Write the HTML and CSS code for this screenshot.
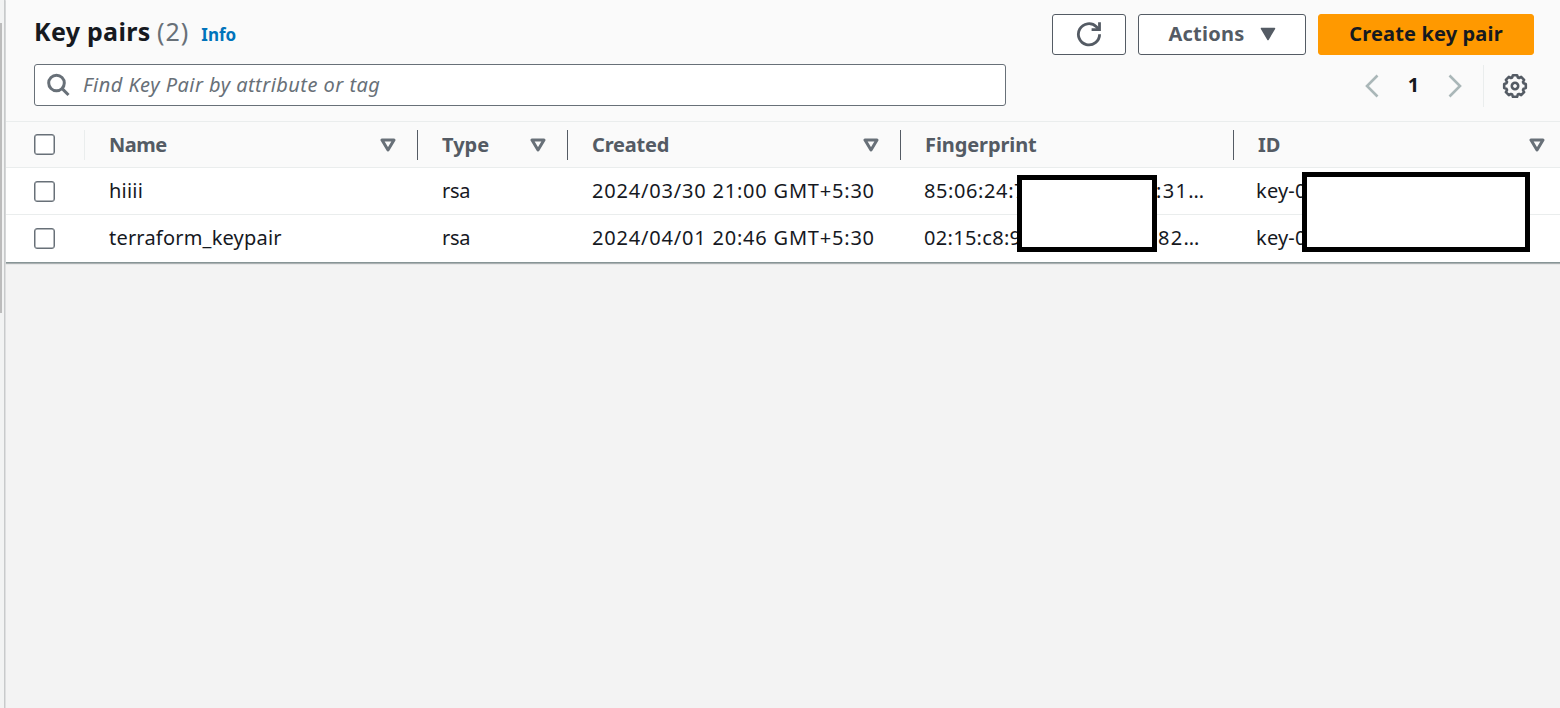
FILE: index.html
```html
<!DOCTYPE html>
<html lang="en">
<head>
<meta charset="utf-8">
<title>Key pairs</title>
<link rel="stylesheet" href="styles.css">
</head>
<body>
<div class="page">
  <aside class="rail"><div class="rail-thumb"></div></aside>
  <main class="content">
    <section class="panel">
      <header class="panel-header">
        <div class="title-row">
          <h1 class="title"><span class="title-name">Key pairs</span><span class="count">(2)</span></h1>
          <a class="info">Info</a>
          <div class="actions">
            <button class="btn btn-refresh" aria-label="Refresh">
              <svg width="26" height="26" viewBox="0 0 26 26" fill="none" stroke="#545b64" stroke-width="2.800"><path d="M23.600 13.300A10.600 10.600 0 1 1 20.400 5.700L22.500 8"/><path d="M23.500 1.200V8.700H15.600"/></svg>
            </button>
            <button class="btn btn-actions"><span class="label-actions">Actions</span>
              <svg width="16" height="14" viewBox="0 0 16 14"><path d="M1.500 1.500h13L8 12.500z" fill="#545b64" stroke="#545b64" stroke-width="1.500" stroke-linejoin="round"/></svg>
            </button>
            <button class="btn btn-primary"><span class="label-create">Create key pair</span></button>
          </div>
        </div>
        <div class="filter-row">
          <div class="search">
            <svg width="24" height="24" viewBox="0 0 24 24" fill="none" stroke="#687078" stroke-width="3"><circle cx="9.500" cy="10" r="7.800"/><path d="M14.900 15.400L21.500 22"/></svg>
            <span class="placeholder">Find Key Pair by attribute or tag</span>
          </div>
          <nav class="pager">
            <svg width="14" height="24" viewBox="0 0 14 24" fill="none" stroke="#aab7b8" stroke-width="2.600"><path d="M12.500 1.500L2 12l10.500 10.500"/></svg>
            <span class="page-number">1</span>
            <svg width="14" height="24" viewBox="0 0 14 24" fill="none" stroke="#aab7b8" stroke-width="2.600"><path d="M1.500 1.500L12 12L1.500 22.500"/></svg>
            <span class="settings">
              <svg width="26" height="26" viewBox="-13 -13 26 26" fill="none" stroke="#545b64" stroke-width="2.600" stroke-linejoin="round"><path d="M10.800 -2.100V2.100L8.550 2.800L8 4.100L9.100 6.150L6.150 9.100L4.100 8L2.800 8.550L2.100 10.800H-2.100L-2.800 8.550L-4.100 8L-6.150 9.100L-9.100 6.150L-8 4.100L-8.550 2.800L-10.800 2.100V-2.100L-8.550 -2.800L-8 -4.100L-9.100 -6.150L-6.150 -9.100L-4.100 -8L-2.800 -8.550L-2.100 -10.800H2.100L2.800 -8.550L4.100 -8L6.150 -9.100L9.100 -6.150L8 -4.100L8.550 -2.800Z"/><circle r="3.200"/></svg>
            </span>
          </nav>
        </div>
      </header>
      <div class="table">
        <div class="row head">
          <div class="cell check"><i class="box"></i></div>
          <div class="cell"><span class="h-name">Name</span><svg class="sort" width="16" height="14" viewBox="0 0 16 14"><path d="M2 2h12L8 12z"/></svg></div>
          <div class="cell"><span class="h-type">Type</span><svg class="sort" width="16" height="14" viewBox="0 0 16 14"><path d="M2 2h12L8 12z"/></svg></div>
          <div class="cell"><span class="h-created">Created</span><svg class="sort" width="16" height="14" viewBox="0 0 16 14"><path d="M2 2h12L8 12z"/></svg></div>
          <div class="cell"><span class="h-finger">Fingerprint</span></div>
          <div class="cell last"><span class="h-id">ID</span><svg class="sort" width="16" height="14" viewBox="0 0 16 14"><path d="M2 2h12L8 12z"/></svg></div>
        </div>
        <div class="row">
          <div class="cell check"><i class="box"></i></div>
          <div class="cell"><span class="value">hiiii</span></div>
          <div class="cell"><span class="type">rsa</span></div>
          <div class="cell"><span class="date">2024/03/30 21:00 GMT+5:30</span></div>
          <div class="cell print"><span class="print-start">85:06:24:7</span><span class="print-end">:31…</span></div>
          <div class="cell last id"><span class="key">key-0</span></div>
        </div>
        <div class="row">
          <div class="cell check"><i class="box"></i></div>
          <div class="cell"><span class="value">terraform_keypair</span></div>
          <div class="cell"><span class="type">rsa</span></div>
          <div class="cell"><span class="date">2024/04/01 20:46 GMT+5:30</span></div>
          <div class="cell print"><span class="print-start second">02:15:c8:9</span><span class="print-end second">82…</span></div>
          <div class="cell last id"><span class="key">key-0</span></div>
        </div>
        <div class="mask mask-print"></div>
        <div class="mask mask-id"></div>
      </div>
    </section>
  </main>
</div>
</body>
</html>
```
FILE: styles.css
```css
* { box-sizing: border-box; }
body {
  margin: 0;
  background: #f3f3f3;
  color: #16191f;
  font: 20px/28px "Noto Sans", sans-serif;
  overflow: hidden;
}
svg { display: block; flex: none; }
span, a { white-space: nowrap; }
.page { display: flex; height: 708px; }
.rail { width: 5px; flex: none; background: #f2f3f3; border-right: 1px solid #c8cacb; padding-top: 23px; }
.rail-thumb { width: 2px; height: 290px; background: #bcbcbc; }
.content { flex: 1; min-width: 0; border-left: 1px solid #dedfe0; }
.panel { background: #fff; border-bottom: 1px solid #879596; box-shadow: 0 1px 1px #aab0b1; height: 263px; }
.panel-header { height: 122px; background: #fafafa; border-bottom: 1px solid #eaeded; padding: 14px 26px 0 28px; }
.title-row { display: flex; height: 41px; }
.title { display: flex; gap: 7px; margin: -1px 0 0; font-size: 25px; line-height: 36px; font-weight: 700; }
.title-name { letter-spacing: 0.3px; width: 116px; }
.count { font-weight: 400; color: #687078; letter-spacing: 1px; }
.info { margin-left: 12px; padding-top: 7px; font-size: 17px; font-weight: 700; color: #0073bb; }
.actions { display: flex; gap: 12px; margin-left: auto; }
.btn {
  display: flex; align-items: center; justify-content: center;
  height: 41px; padding: 0 0 2px; border: 1px solid #545b64; border-radius: 3px;
  background: #fff; color: #545b64; font: 700 20px/28px "Noto Sans", sans-serif;
}
.btn-refresh { width: 74px; }
.btn-actions { width: 168px; gap: 15px; letter-spacing: 0.25px; }
.btn-primary { width: 216px; background: #ff9900; border-color: #ff9900; color: #16191f; letter-spacing: 0.15px; }
.filter-row { display: flex; justify-content: space-between; margin-top: 9px; height: 42px; }
.search { display: flex; align-items: center; gap: 12px; width: 972px; padding-left: 12px; background: #fff; border: 1px solid #687078; border-radius: 3px; }
.placeholder { font-style: italic; color: #687078; letter-spacing: 0.47px; }
.pager { display: flex; align-items: center; padding-top: 2px; }
.page-number { width: 69px; padding-bottom: 2px; text-align: center; font-weight: 700; }
.settings { display: flex; align-items: center; justify-content: flex-end; width: 51px; height: 42px; margin-left: 21px; padding-right: 6px; border-left: 1px solid #eaeded; }
.table { position: relative; }
.row { display: grid; grid-template-columns: 79px 333px 150px 333px 333px 1fr; height: 47px; border-bottom: 1px solid #eaeded; align-items: center; }
.head { height: 46px; background: #fafafa; color: #545b64; font-weight: 700; }
.row:nth-child(3) { border-color: transparent; }
.cell { display: flex; align-items: center; padding-left: 24px; min-width: 0; }
.check { padding-left: 28px; }
.box { width: 21px; height: 21px; border: 1.500px solid #687078; border-radius: 3px; background: #fff; box-shadow: inset 0 0 0 0.500px #687078; }
.head .cell { height: 30px; border-right: 1px solid #545b64; padding-right: 21px; }
.head .check { border-color: #eaeded; }
.head .last { border: 0; padding-right: 15px; }
.h-name { letter-spacing: -0.5px; }
.h-created { letter-spacing: -0.2px; }
.h-finger { letter-spacing: -0.1px; }
.sort { margin-left: auto; fill: none; stroke: #687078; stroke-width: 3; stroke-linejoin: round; }
.value { letter-spacing: 0.2px; }
.type { letter-spacing: -0.3px; }
.date { letter-spacing: 0.8px; }
.print { padding-left: 23px; }
.print-start { width: 100px; overflow: hidden; letter-spacing: 0.6px; }
.print-start.second { letter-spacing: 0.3px; }
.print-end { margin-left: 132px; letter-spacing: 1.3px; }
.print-end.second { margin-left: 134px; }
.id { padding-left: 22px; }
.key { letter-spacing: 0.2px; }
.mask { position: absolute; border: 5px solid #000; background: #fff; }
.mask-print { left: 1011px; top: 53px; width: 140px; height: 77px; }
.mask-id { left: 1296px; top: 50px; width: 228px; height: 80px; }
```
